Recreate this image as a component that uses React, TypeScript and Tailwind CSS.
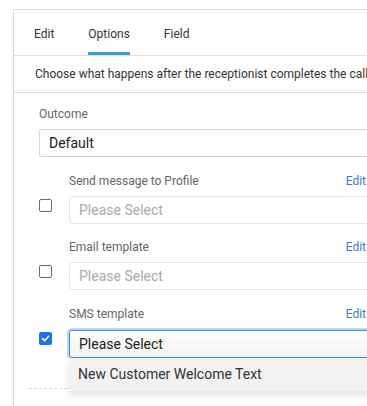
import React from "react";

function Checkbox({ checked }: { checked?: boolean }) {
  if (checked) {
    return (
      <div className="w-[13px] h-[13px] rounded-[2px] bg-[#1a73e8] flex items-center justify-center">
        <svg width="9" height="9" viewBox="0 0 10 10">
          <polyline points="1.5,5.2 4,7.5 8.5,2.5" fill="none" stroke="white" strokeWidth="1.8" strokeLinecap="round" strokeLinejoin="round" />
        </svg>
      </div>
    );
  }
  return <div className="w-[13px] h-[13px] rounded-[2px] border border-[#6b6b6b] bg-white" />;
}

function Group({ label, checked, focused }: { label: string; checked?: boolean; focused?: boolean }) {
  return (
    <div className="flex">
      <div className="mt-[28px] mr-[17px]">
        <Checkbox checked={checked} />
      </div>
      <div className="flex flex-col">
        <div className="w-[297px] h-[20px] flex items-center justify-between text-[12px]">
          <span className="text-[#666]">{label}</span>
          <span className="text-[#3b7dc4]">Edit</span>
        </div>
        {focused ? (
          <div className="relative mt-[6px]">
            <div className="w-[320px] h-[28px] rounded-[3px] border border-[#3d8fd6] shadow-[0_0_0_2px_rgba(90,150,225,0.4)] bg-gradient-to-b from-white to-[#f3f3f3] flex items-center pl-[9px] text-[14px] text-[#222]">
              Please Select
            </div>
            <div className="absolute z-10 left-0 top-[28px] w-[320px] h-[33px] bg-[#f2f2f2] shadow-[0_4px_8px_rgba(0,0,0,0.12)] flex items-center pl-[9px] text-[14px] text-[#333]">
              New Customer Welcome Text
            </div>
          </div>
        ) : (
          <div className="mt-[5px] w-[320px] h-[28px] rounded-[3px] border border-[#e6e6e6] bg-white flex items-center pl-[9px] text-[14px] text-[#aaa]">
            Please Select
          </div>
        )}
      </div>
    </div>
  );
}

export default function App() {
  return (
    <div className="w-[367px] h-[406px] overflow-hidden bg-white" style={{ fontFamily: "Roboto, 'Liberation Sans', sans-serif" }}>
      <div className="ml-[13px] mt-[9px] w-[420px] h-[420px] border-l border-t border-[#ddd]">
        <div className="flex h-[46px] border-b border-[#ddd] pl-[20px] gap-[34px] text-[12px] text-[#333]">
          {["Edit", "Options", "Field"].map((t) => (
            <div key={t} className="flex flex-col h-[45px]">
              <div className="flex-1 flex items-center pt-[6px]">{t}</div>
              <div className={t === "Options" ? "h-[3px] bg-[#3a9ad9]" : "h-[3px]"} />
            </div>
          ))}
        </div>
        <div className="h-[37px] border-b border-[#ddd] flex items-center pl-[21px] text-[12px] text-[#333] whitespace-nowrap">
          Choose what happens after the receptionist completes the call
        </div>
        <div className="pl-[25px] pt-[11px]">
          <div className="h-[20px] flex items-center text-[12px] text-[#666]">Outcome</div>
          <div className="mt-[5px] w-[340px] h-[28px] rounded-[3px] border border-[#d5d5d5] flex items-center pl-[9px] text-[14px] text-[#222]">
            Default
          </div>
          <div className="mt-[14px] flex flex-col">
            <Group label="Send message to Profile" />
            <div className="mt-[13px]">
              <Group label="Email template" />
            </div>
            <div className="mt-[14px]">
              <Group label="SMS template" checked focused />
            </div>
          </div>
          <div className="-ml-[10px] mt-[30px] border-t border-dashed border-[#ddd] w-[360px]" />
        </div>
      </div>
    </div>
  );
}
